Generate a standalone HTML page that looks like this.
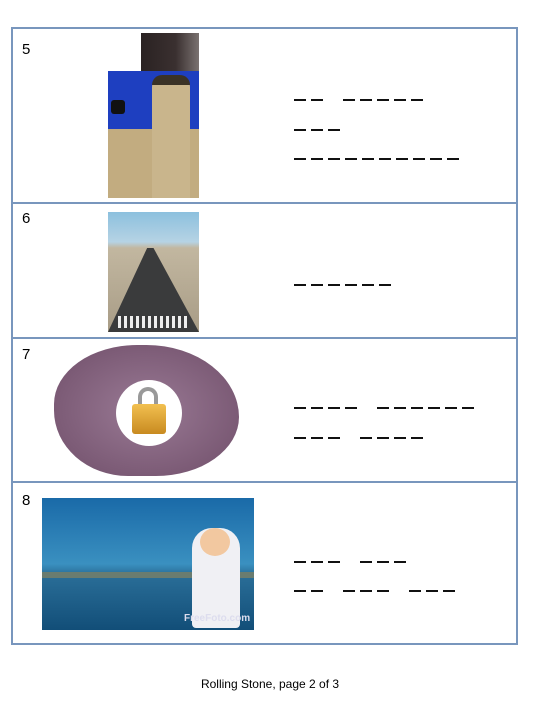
<!DOCTYPE html><html><head><style>
body{margin:0;width:540px;height:720px;background:#fff;position:relative;font-family:"Liberation Sans",sans-serif;overflow:hidden}
.a{position:absolute}
.hl{position:absolute;left:11px;width:507px;height:2px;background:#7896bd}
.vl{position:absolute;top:27px;width:2px;height:618px;background:#7896bd}
.n{position:absolute;left:22px;font-size:15px;color:#000;font-family:"Liberation Sans",sans-serif}
.d{position:absolute;left:294px;display:flex;height:2px}
.d i{display:block;width:12px;height:2px;background:#111;margin-right:5px}
.d b{display:block;width:15px}
</style></head><body>
<div class="hl" style="top:27px"></div>
<div class="hl" style="top:202px"></div>
<div class="hl" style="top:337px"></div>
<div class="hl" style="top:481px"></div>
<div class="hl" style="top:643px"></div>
<div class="vl" style="left:11px"></div>
<div class="vl" style="left:516px"></div>

<div class="n" style="top:41px">5</div>
<div class="n" style="top:210px">6</div>
<div class="n" style="top:346px">7</div>
<div class="n" style="top:492px">8</div>

<div class="a" style="left:141px;top:33px;width:58px;height:38px;background:linear-gradient(90deg,#2a2222,#3a3030 60%,#7a7270)"></div>
<div class="a" style="left:108px;top:71px;width:91px;height:127px;background:#1e3fc0;overflow:hidden">
 <div class="a" style="left:0;top:58px;width:91px;height:69px;background:#c2ac80"></div>
 <div class="a" style="left:44px;top:4px;width:38px;height:123px;background:#c9b58c;border-radius:12px 12px 0 0"></div>
 <div class="a" style="left:44px;top:4px;width:38px;height:10px;background:#3a3226;border-radius:12px 12px 0 0"></div>
 <div class="a" style="left:3px;top:29px;width:14px;height:14px;background:#111;border-radius:3px"></div>
</div>
<div class="a" style="left:108px;top:212px;width:91px;height:120px;background:linear-gradient(#8cc0de 0%,#b6d3e4 25%,#c2b7a0 30%,#a89c86 100%);overflow:hidden">
 <div class="a" style="left:0;top:36px;width:91px;height:84px;background:#3a3b3c;clip-path:polygon(43% 0,50% 0,100% 100%,0 100%)"></div>
 <div class="a" style="left:10px;top:104px;width:72px;height:12px;background:repeating-linear-gradient(90deg,#eee 0 3px,transparent 3px 6px)"></div>
</div>
<div class="a" style="left:54px;top:345px;width:185px;height:131px;background:radial-gradient(ellipse at 50% 50%,#9a7a95,#7c5b76 70%,#6e4f69);border-radius:45% 50% 45% 40% / 45% 55% 45% 50%"></div>
<div class="a" style="left:116px;top:380px;width:66px;height:66px;border-radius:50%;background:#fff"></div>
<div class="a" style="left:138px;top:387px;width:20px;height:22px;border:4px solid #999;border-bottom:none;border-radius:11px 11px 0 0;box-sizing:border-box"></div>
<div class="a" style="left:132px;top:404px;width:34px;height:30px;background:linear-gradient(#f2c050,#c88a20);border-radius:3px"></div>
<div class="a" style="left:42px;top:498px;width:212px;height:132px;background:linear-gradient(#1a6aa8 0%,#3a90c0 50%,#2a6e98 58%,#124e78 100%);overflow:hidden">
 <div class="a" style="left:0;top:74px;width:212px;height:6px;background:#6a7c70"></div>
 <div class="a" style="left:150px;top:30px;width:48px;height:100px;background:#f0f0f4;border-radius:20px 20px 4px 4px"></div>
 <div class="a" style="left:158px;top:30px;width:30px;height:28px;background:#f2c8a0;border-radius:50%"></div>
 <div class="a" style="left:142px;top:115px;font-size:10px;color:#dde;font-weight:bold">FreeFoto.com</div>
</div>

<div class="d" style="top:99px"><i></i><i></i><b></b><i></i><i></i><i></i><i></i><i></i></div>
<div class="d" style="top:129px"><i></i><i></i><i></i></div>
<div class="d" style="top:158px"><i></i><i></i><i></i><i></i><i></i><i></i><i></i><i></i><i></i><i></i></div>
<div class="d" style="top:284px"><i></i><i></i><i></i><i></i><i></i><i></i></div>
<div class="d" style="top:407px"><i></i><i></i><i></i><i></i><b></b><i></i><i></i><i></i><i></i><i></i><i></i></div>
<div class="d" style="top:437px"><i></i><i></i><i></i><b></b><i></i><i></i><i></i><i></i></div>
<div class="d" style="top:561px"><i></i><i></i><i></i><b></b><i></i><i></i><i></i></div>
<div class="d" style="top:590px"><i></i><i></i><b></b><i></i><i></i><i></i><b></b><i></i><i></i><i></i></div>

<div class="a" style="left:0;width:540px;top:677px;text-align:center;font-size:12px;color:#000">Rolling Stone, page 2 of 3</div>
</body></html>
